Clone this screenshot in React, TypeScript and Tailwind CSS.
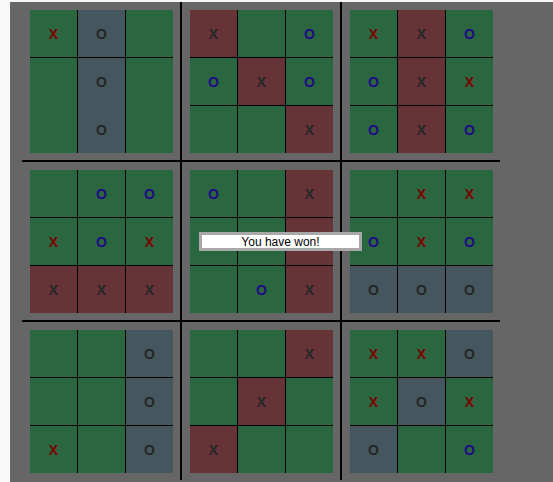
import React from 'react';

// lower case = plain mark, upper case = part of the winning line
const boards: string[][] = [
  ['xO ', ' O ', ' O '],
  ['X o', 'oXo', '  X'],
  ['xXo', 'oXx', 'oXo'],
  [' oo', 'xox', 'XXX'],
  ['o X', '  X', ' oX'],
  [' xx', 'oxo', 'OOO'],
  ['  O', '  O', 'x O'],
  ['  X', ' X ', 'X  '],
  ['xxO', 'xOx', 'O o'],
];

const cellStyle = (c: string) => {
  switch (c) {
    case 'X':
      return 'bg-[#663336] text-[#262626]';
    case 'O':
      return 'bg-[#46565e] text-[#262626]';
    case 'x':
      return 'bg-[#2a6640] text-[#800000]';
    case 'o':
      return 'bg-[#2a6640] text-[#1f0a85]';
    default:
      return 'bg-[#2a6640]';
  }
};

// first board renders without the line between its last two rows
const Board = ({ rows, joinLast }: { rows: string[]; joinLast?: boolean }) => (
  <div className="grid grid-cols-[47px_47px_47px] grid-rows-[47px_47px_47px] gap-px bg-black w-[143px] h-[143px]">
    {rows.flatMap((row, r) =>
      row.split('').map((c, i) => (
        <div
          key={`${r}-${i}`}
          className={`flex items-center justify-center text-[14px] font-bold leading-none ${cellStyle(c)} ${
            joinLast && r === 1 ? 'mb-[-1px]' : ''
          }`}
        >
          {c.trim() ? c.toUpperCase() : ''}
        </div>
      ))
    )}
  </div>
);

export default function App() {
  return (
    <div className="min-h-screen bg-[#f8f8f8] pl-[10px] pt-[2px]" style={{ fontFamily: '"Liberation Sans", Arial, sans-serif' }}>
      <div className="relative bg-[#666666] min-h-[480px] pl-[12px]">
        <div className="flex flex-col w-[478px]">
          {[0, 1, 2].map((r) => (
            <div key={r} className={`flex ${r > 0 ? 'border-t-2 border-black' : ''}`}>
              {[0, 1, 2].map((c) => (
                <div
                  key={c}
                  className={`pl-[8px] pr-[7px] pt-[8px] pb-[7px] ${c > 0 ? 'border-l-2 border-black' : ''}`}
                >
                  <Board rows={boards[r * 3 + c]} joinLast={r === 0 && c === 0} />
                </div>
              ))}
            </div>
          ))}
        </div>

        <div className="absolute left-[189px] top-[230px] w-[163px] h-[19px] bg-white border-[3px] border-[#a8a8a8] flex items-center justify-center text-[12px] text-black leading-none">
          You have won!
        </div>
      </div>
    </div>
  );
}
